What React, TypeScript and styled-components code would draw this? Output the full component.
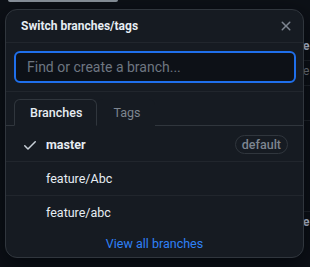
import React from "react";
import styled, { createGlobalStyle } from "styled-components";

const GlobalStyle = createGlobalStyle`
  html, body {
    margin: 0;
    padding: 0;
    background: #0d1117;
    font-family: Roboto, "Liberation Sans", Arial, sans-serif;
    color: #e6edf3;
  }
`;

const Page = styled.div`
  position: relative;
  width: 310px;
  height: 267px;
  overflow: hidden;
  background: #0d1117;
`;

const ButtonEdge = styled.div`
  width: 110px;
  height: 2px;
  margin-left: 8px;
  background: #8b949e;
  border-radius: 0 0 4px 4px;
`;

const FileList = styled.div`
  margin-top: 34px;
  margin-left: 303px;
  display: flex;
  flex-direction: column;
`;

const FileLine = styled.div<{ $muted?: boolean; $height: number }>`
  height: ${(p) => p.$height}px;
  font-size: 12px;
  font-weight: ${(p) => (p.$muted ? 400 : 700)};
  color: ${(p) => (p.$muted ? "#7d8590" : "#c9d9f3")};
  border-bottom: 1px solid #21262d;
  white-space: nowrap;
  line-height: 20px;
`;

const Popup = styled.section`
  position: absolute;
  left: 5px;
  top: 9px;
  width: 299px;
  box-sizing: border-box;
  background: #161b22;
  border: 1px solid #30363d;
  border-radius: 12px;
  overflow: hidden;
  box-shadow: 0 8px 24px rgba(1, 4, 9, 0.75);
`;

const Header = styled.header`
  height: 32px;
  display: flex;
  align-items: center;
  justify-content: space-between;
  padding: 0 9px 0 15px;
  border-bottom: 1px solid #21262d;
`;

const Title = styled.h3`
  margin: 0;
  font-size: 12px;
  font-weight: 700;
  color: #e6edf3;
`;

const CloseButton = styled.button`
  display: flex;
  padding: 0;
  border: 0;
  background: none;
  color: #7d8590;
`;

const SearchBox = styled.div`
  padding: 8px 7px 8px 8px;
  border-bottom: 1px solid #21262d;
`;

const Input = styled.input`
  width: 100%;
  height: 32px;
  box-sizing: border-box;
  padding: 0 11px;
  background: #0d1117;
  border: 2px solid #1f6feb;
  border-radius: 6px;
  outline: none;
  color: #e6edf3;
  font-family: Roboto, "Liberation Sans", Arial, sans-serif;
  font-size: 14px;
  &::placeholder {
    color: #6e7681;
  }
`;

const TabNav = styled.nav`
  display: flex;
  padding: 7px 8px 0;
  border-bottom: 1px solid #30363d;
`;

const Tab = styled.button<{ $selected?: boolean }>`
  height: 27px;
  margin-bottom: -1px;
  padding: 0 14px 0 15px;
  font-family: Roboto, "Liberation Sans", Arial, sans-serif;
  font-size: 12.5px;
  font-weight: ${(p) => (p.$selected ? 500 : 400)};
  color: ${(p) => (p.$selected ? "#e6edf3" : "#7d8590")};
  background: #161b22;
  border: 1px solid ${(p) => (p.$selected ? "#30363d" : "transparent")};
  border-bottom-color: ${(p) => (p.$selected ? "#161b22" : "transparent")};
  border-radius: 6px 6px 0 0;
`;

const BranchList = styled.ul`
  list-style: none;
  margin: 0;
  padding: 2px 0 0;
`;

const BranchRow = styled.li<{ $last?: boolean }>`
  height: 33px;
  display: flex;
  align-items: center;
  padding: 0 15px 0 16px;
  border-bottom: 1px solid ${(p) => (p.$last ? "transparent" : "#21262d")};
  font-size: 12.5px;
  color: #e6edf3;
`;

const CheckSlot = styled.span`
  width: 16px;
  height: 16px;
  margin-right: 8px;
  color: #c9d1d9;
  display: flex;
`;

const BranchName = styled.span<{ $current?: boolean }>`
  flex: 1;
  font-weight: ${(p) => (p.$current ? 700 : 400)};
`;

const Label = styled.span`
  height: 19px;
  box-sizing: border-box;
  padding: 0 6px;
  border: 1px solid #30363d;
  border-radius: 10px;
  display: flex;
  align-items: center;
  font-size: 12.5px;
  font-weight: 500;
  color: #7d8590;
`;

const Footer = styled.footer`
  height: 27px;
  display: flex;
  align-items: center;
  justify-content: center;
`;

const ViewAll = styled.a`
  font-size: 12.5px;
  color: #2f81f7;
  text-decoration: none;
`;

const CheckIcon = () => (
  <svg width="16" height="16" viewBox="0 0 16 16" fill="currentColor">
    <path d="M13.78 4.22a.75.75 0 0 1 0 1.06l-7.25 7.25a.75.75 0 0 1-1.06 0L2.22 9.28a.751.751 0 0 1 .018-1.042.751.751 0 0 1 1.042-.018L6 10.94l6.72-6.72a.75.75 0 0 1 1.06 0Z" />
  </svg>
);

const XIcon = () => (
  <svg width="16" height="16" viewBox="0 0 16 16" fill="currentColor">
    <path d="M3.72 3.72a.75.75 0 0 1 1.06 0L8 6.94l3.22-3.22a.749.749 0 0 1 1.275.326.749.749 0 0 1-.215.734L9.06 8l3.22 3.22a.749.749 0 0 1-.326 1.275.749.749 0 0 1-.734-.215L8 9.06l-3.22 3.22a.751.751 0 0 1-1.042-.018.751.751 0 0 1-.018-1.042L6.94 8 3.72 4.78a.75.75 0 0 1 0-1.06Z" />
  </svg>
);

const branches = [
  { name: "master", current: true },
  { name: "feature/Abc" },
  { name: "feature/abc" },
];

export default function App() {
  return (
    <Page>
      <GlobalStyle />
      <ButtonEdge />
      <FileList>
        <FileLine $height={24}>e</FileLine>
        <FileLine $muted $height={24}>e</FileLine>
        <FileLine $muted $height={34} />
        <FileLine $muted $height={90} />
        <FileLine $height={60}>e</FileLine>
      </FileList>
      <Popup>
        <Header>
          <Title>Switch branches/tags</Title>
          <CloseButton aria-label="Close">
            <XIcon />
          </CloseButton>
        </Header>
        <SearchBox>
          <Input placeholder="Find or create a branch..." />
        </SearchBox>
        <TabNav>
          <Tab $selected>Branches</Tab>
          <Tab>Tags</Tab>
        </TabNav>
        <BranchList>
          {branches.map((b, i) => (
            <BranchRow key={b.name} $last={i === branches.length - 1}>
              <CheckSlot>{b.current && <CheckIcon />}</CheckSlot>
              <BranchName $current={b.current}>{b.name}</BranchName>
              {b.current && <Label>default</Label>}
            </BranchRow>
          ))}
        </BranchList>
        <Footer>
          <ViewAll href="#">View all branches</ViewAll>
        </Footer>
      </Popup>
    </Page>
  );
}
